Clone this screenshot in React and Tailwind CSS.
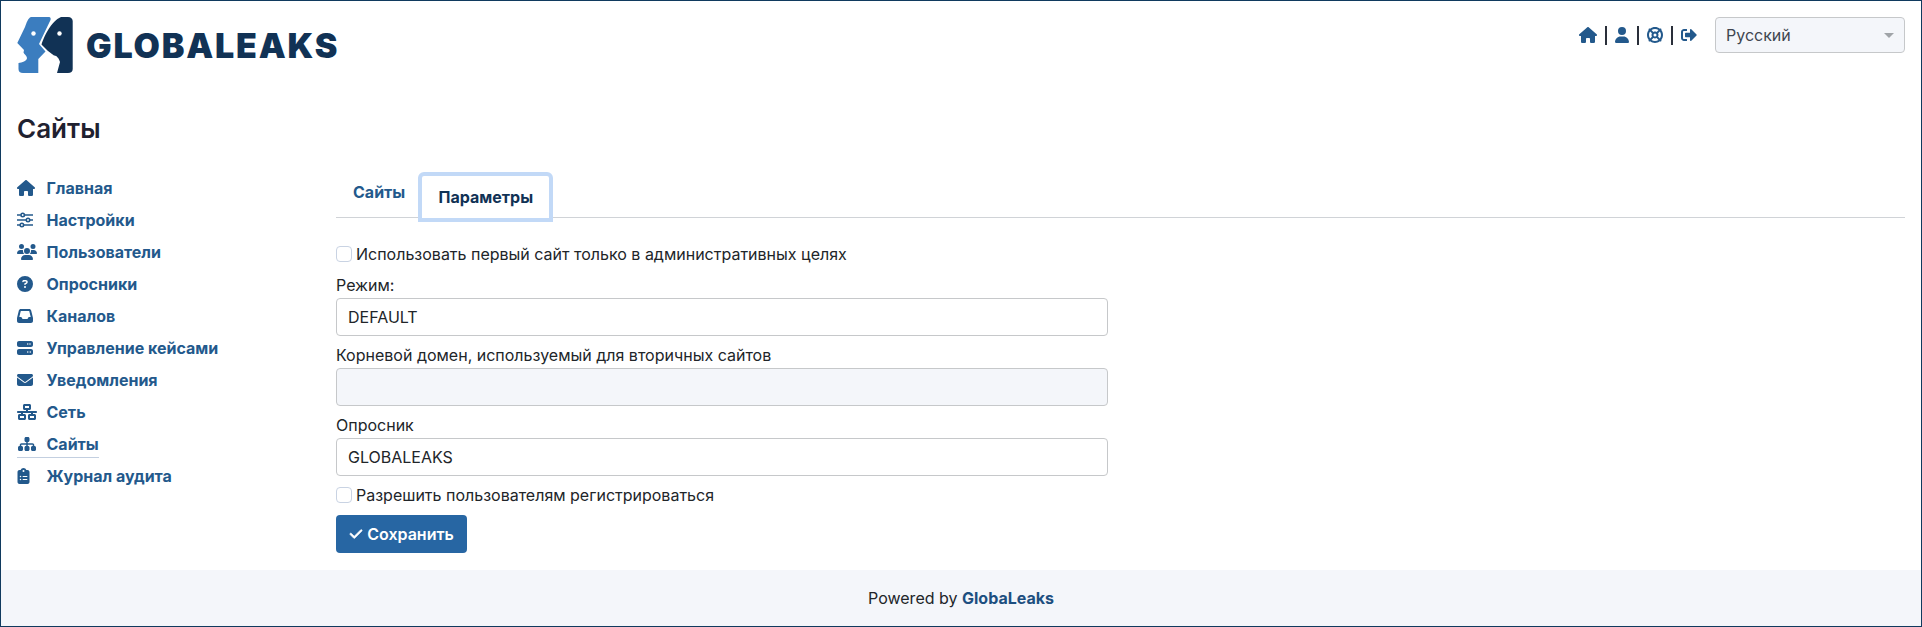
import { FaSignOutAlt } from 'react-icons/fa';
import { FaCheck, FaCircleQuestion, FaClipboardList, FaEnvelope, FaHouse, FaInbox, FaLifeRing, FaNetworkWired, FaServer, FaSitemap, FaUser, FaUsers } from 'react-icons/fa6';

function Logo() {
  return (
    <svg width="58" height="58" viewBox="0 0 58 58" className="shrink-0">
      <path fill="#3b7dbf" d="M14 0H32C33.500 0 34 1.500 33.500 3L22 27L28.500 34.500L21.300 42V56H6C3 56 1.500 54.500 1.500 52V46C5 45.500 10 44 10 41C10 39 7 37 6.500 35.500L7 33L0.300 26L8 10C9.500 6 11 1 14 0Z" />
      <circle cx="16.500" cy="16.500" r="2.200" fill="#fff" />
      <path fill="#113255" d="M44 0H51C54 0 55.700 2 55.700 4V52C55.700 54.500 54 56 51 56H40L43 45C42 41 39 38 37 38.500L31 34L24.500 27.500C27 20 34 4 44 0Z" />
      <circle cx="42.500" cy="16.500" r="2.200" fill="#fff" />
    </svg>
  );
}

function SlidersIcon() {
  return (
    <svg viewBox="0 0 16 16" className="h-4 w-4" fill="none" stroke="currentColor" strokeWidth="1.600">
      <path d="M0 3H3.800M7.600 3H16M0 8H9.100M12.900 8H16M0 13H3M6.800 13H16" />
      <circle cx="5.700" cy="3" r="1.700" />
      <circle cx="11" cy="8" r="1.700" />
      <circle cx="4.900" cy="13" r="1.700" />
    </svg>
  );
}

const menu = [
  { label: 'Главная', icon: <FaHouse className="h-[16px] w-[18px]" /> },
  { label: 'Настройки', icon: <SlidersIcon /> },
  { label: 'Пользователи', icon: <FaUsers className="h-[16px] w-[20px]" /> },
  { label: 'Опросники', icon: <FaCircleQuestion className="h-4 w-4" /> },
  { label: 'Каналов', icon: <FaInbox className="h-4 w-4" /> },
  { label: 'Управление кейсами', icon: <FaServer className="h-4 w-4" /> },
  { label: 'Уведомления', icon: <FaEnvelope className="h-4 w-4" /> },
  { label: 'Сеть', icon: <FaNetworkWired className="h-[16px] w-[20px]" /> },
  { label: 'Сайты', icon: <FaSitemap className="h-[16px] w-[20px]" />, active: true },
  { label: 'Журнал аудита', icon: <FaClipboardList className="h-4 w-[13px]" /> },
];

function Field({ label, value, disabled }) {
  return (
    <div className="mb-[7px] w-[772px]">
      <div className="mb-px h-[24px] leading-[24px]">{label}</div>
      <div className={`flex h-[38px] items-center rounded-[4px] border border-[#c6c8ca] px-[11px] ${disabled ? 'bg-[#f4f6fa]' : 'bg-white'}`}>{value}</div>
    </div>
  );
}

function Check({ label }) {
  return (
    <label className="flex h-[24px] items-center">
      <span className="mr-[4px] h-[16px] w-[16px] rounded-[4px] border border-[#c9d3e3] bg-white" />
      {label}
    </label>
  );
}

export default function App() {
  return (
    <div className="flex h-[627px] flex-col border border-[#103a5e] bg-white font-['Inter',sans-serif] text-[16px] text-[#212529]">
      <header className="flex h-[95px] shrink-0 items-start justify-between pl-[16px] pr-[16px] pt-[16px]">
        <div className="flex items-center gap-[11px]">
          <Logo />
          <span className="text-[34px] font-black leading-none tracking-[1.800px] text-[#113255]">GLOBALEAKS</span>
        </div>
        <div className="flex items-center">
          <div className="flex items-center text-[#23598c]">
            <FaHouse className="h-[16px] w-[18px]" />
            <span className="mx-[8px] h-[19px] w-[2px] bg-[#2a2f3a]" />
            <FaUser className="h-4 w-[14px]" />
            <span className="mx-[8px] h-[19px] w-[2px] bg-[#2a2f3a]" />
            <FaLifeRing className="h-4 w-4" />
            <span className="mx-[8px] h-[19px] w-[2px] bg-[#2a2f3a]" />
            <FaSignOutAlt className="h-4 w-4" />
          </div>
          <div className="ml-[18px] flex h-[36px] w-[190px] items-center justify-between rounded-[4px] border border-[#c6c8ca] bg-[#f4f6fa] pl-[10px] pr-[10px] text-[#3f4650]">
            Русский
            <span className="h-0 w-0 border-x-[5px] border-t-[5px] border-x-transparent border-t-[#a0a4a8]" />
          </div>
        </div>
      </header>

      <main className="flex flex-1 flex-col pl-[16px] pr-[16px]">
        <h1 className="h-[45px] text-[26px] font-semibold leading-[66px] text-[#1f2130]">Сайты</h1>
        <div className="flex flex-1">
          <nav className="w-[319px] shrink-0 pt-[31px]">
            {menu.map((item) => (
              <div key={item.label} className="flex h-[32.060px] items-center font-bold text-[#23598c]">
                <span className={`flex items-center ${item.active ? 'border-b border-[#c3cfe0] pb-[1px] pt-[2px]' : ''}`}>
                  <span className="flex w-[29.500px] shrink-0 items-center">{item.icon}</span>
                  {item.label}
                </span>
              </div>
            ))}
          </nav>
          <section className="flex-1 pt-[27px]">
            <div className="flex h-[50px] items-end border-b border-[#d0d3d7] font-bold">
              <div className="flex h-[50px] items-center pl-[17px] pr-[13px] text-[#23598c]">Сайты</div>
              <div className="-mb-[5px] flex h-[50px] w-[135px] items-center justify-center rounded-t-[6px] border-[4px] border-[#c2d9f7] bg-white text-[#113255]">Параметры</div>
            </div>
            <div className="pt-[24px]">
              <div className="mb-[7px]"><Check label="Использовать первый сайт только в административных целях" /></div>
              <Field label="Режим:" value="DEFAULT" />
              <Field label="Корневой домен, используемый для вторичных сайтов" value="" disabled />
              <Field label="Опросник" value="GLOBALEAKS" />
              <div className="mt-px"><Check label="Разрешить пользователям регистрироваться" /></div>
              <button className="mt-[8px] flex h-[38px] w-[131px] items-center justify-center gap-[4px] rounded-[4px] bg-[#2766a3] font-semibold text-white">
                <FaCheck className="h-[14px] w-[14px]" stroke="currentColor" strokeWidth={24} />
                Сохранить
              </button>
            </div>
          </section>
        </div>
      </main>

      <footer className="flex h-[56px] shrink-0 items-center justify-center bg-[#f4f6fa]">
        Powered by&nbsp;<span className="font-bold text-[#1d4f80]">GlobaLeaks</span>
      </footer>
    </div>
  );
}
